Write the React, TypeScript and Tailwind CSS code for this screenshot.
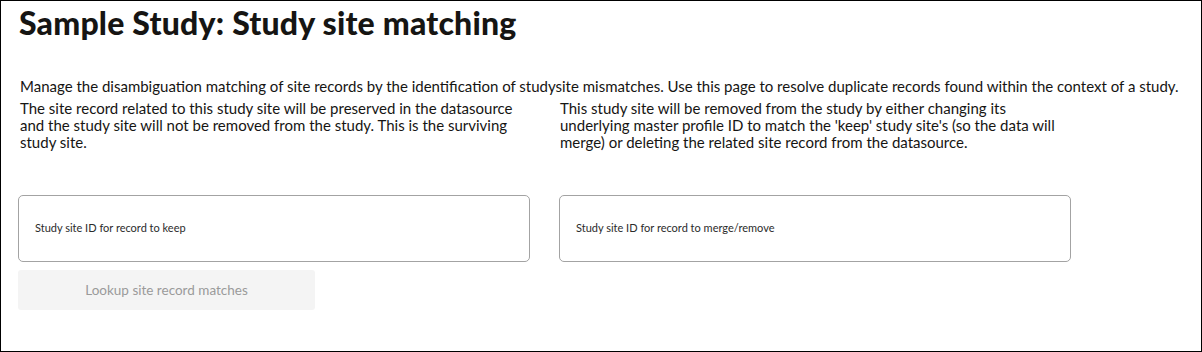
import React from 'react';

const font = { fontFamily: 'Lato, "Liberation Sans", sans-serif' };

const Field: React.FC<{ label: string }> = ({ label }) => (
  <div className="w-[512px] h-[67px] rounded-[5px] border border-[#a3a3a3] flex items-center px-[16px]">
    <span className="text-[11px] text-[#2b2b2b]">{label}</span>
  </div>
);

const App: React.FC = () => {
  return (
    <div className="w-[1202px] h-[352px] border border-black bg-white text-[#161513]" style={font}>
      <div className="pl-[17px] pr-4">
        <h1 className="text-[32px] leading-[36px] font-black tracking-[0.2px] pt-[4px] pl-px text-[#161513]">
          Sample Study: Study site matching
        </h1>
        <p className="mt-[36px] text-[15px] leading-[18px] pl-[2px] whitespace-nowrap">
          Manage the disambiguation matching of site records by the identification of studysite mismatches. Use this page to resolve duplicate records found within the context of a study.
        </p>
        <div className="mt-[5px] grid grid-cols-[540px_515px] text-[15px] leading-[17px] pl-[2px]">
          <p className="w-[505px]">
            The site record related to this study site will be preserved in the datasource and the study site will not be removed from the study. This is the surviving study site.
          </p>
          <p className="w-[515px]">
            This study site will be removed from the study by either changing its underlying master profile ID to match the 'keep' study site's (so the data will merge) or deleting the related site record from the datasource.
          </p>
        </div>
        <div className="mt-[44px] flex gap-[29px]">
          <Field label="Study site ID for record to keep" />
          <Field label="Study site ID for record to merge/remove" />
        </div>
        <button
          disabled
          className="mt-[8px] w-[297px] h-[40px] rounded-[3px] bg-[#f4f4f4] text-[13.5px] text-[#9a9a9a] flex items-center justify-center"
        >
          Lookup site record matches
        </button>
      </div>
    </div>
  );
};

export default App;
